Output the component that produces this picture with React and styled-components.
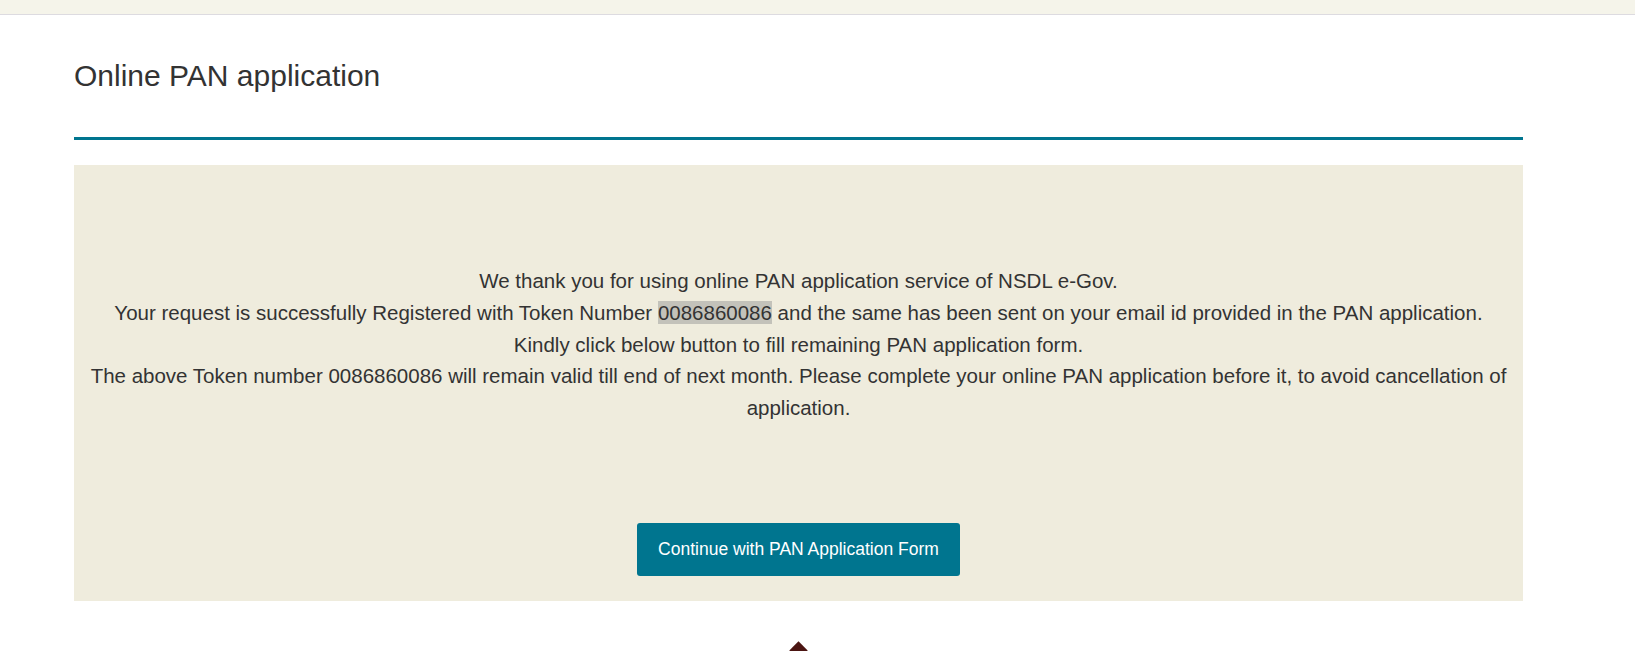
import React from "react";
import styled, { createGlobalStyle } from "styled-components";

const GlobalStyle = createGlobalStyle`
  html, body {
    margin: 0;
    padding: 0;
    background: #fff;
    font-family: "Liberation Sans", Arial, sans-serif;
    color: #333;
  }
`;

const TopBar = styled.div`
  height: 14px;
  background: #f5f4ea;
  border-bottom: 1px solid #dddbe0;
`;

const Container = styled.div`
  width: 1449px;
  margin-left: 74px;
`;

const Heading = styled.h1`
  margin: 44px 0 45px;
  font-size: 30px;
  line-height: 33px;
  font-weight: 400;
  color: #333;
`;

const Rule = styled.hr`
  margin: 0;
  border: 0;
  height: 3px;
  background: #00758f;
`;

const MessageBox = styled.div`
  margin-top: 25px;
  background: #efecdd;
  padding: 100px 10px 25px;
  display: flex;
  flex-direction: column;
  align-items: center;
`;

const Message = styled.p`
  margin: 0;
  font-size: 20.5px;
  line-height: 31.8px;
  text-align: center;
  color: #333;
`;

const Token = styled.span`
  background: #c3c2ba;
`;

const ContinueButton = styled.button`
  margin-top: 99.5px;
  width: 323px;
  height: 53px;
  border: 0;
  border-radius: 3px;
  background: #00758f;
  color: #fff;
  font-family: "Liberation Sans", Arial, sans-serif;
  font-size: 17.5px;
  cursor: pointer;
`;

const Footer = styled.div`
  display: flex;
  justify-content: center;
  padding-top: 43px;
`;

const Diamond = styled.div`
  width: 13px;
  height: 13px;
  background: #4b1512;
  transform: rotate(45deg);
`;

const App = () => {
  return (
    <>
      <GlobalStyle />
      <TopBar />
      <Container>
        <Heading>Online PAN application</Heading>
        <Rule />
        <MessageBox>
          <Message>
            We thank you for using online PAN application service of NSDL e-Gov.
            <br />
            Your request is successfully Registered with Token Number <Token>0086860086</Token> and the same has been sent on your email id provided in the PAN application.
            <br />
            Kindly click below button to fill remaining PAN application form.
            <br />
            The above Token number 0086860086 will remain valid till end of next month. Please complete your online PAN application before it, to avoid cancellation of application.
          </Message>
          <ContinueButton>Continue with PAN Application Form</ContinueButton>
        </MessageBox>
        <Footer>
          <Diamond />
        </Footer>
      </Container>
    </>
  );
};

export default App;
